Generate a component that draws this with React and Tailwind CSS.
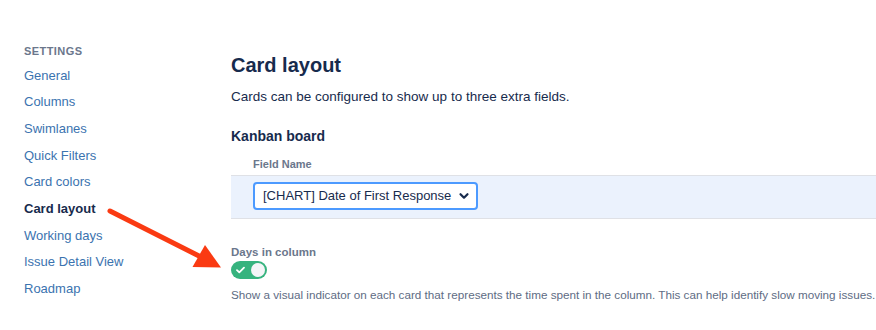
const navItems = [
  'General',
  'Columns',
  'Swimlanes',
  'Quick Filters',
  'Card colors',
  'Card layout',
  'Working days',
  'Issue Detail View',
  'Roadmap',
]

export default function App() {
  return (
    <div className="relative flex w-[876px] h-[330px] overflow-hidden bg-white font-['Liberation_Sans',Arial,sans-serif]">
      {/* Sidebar */}
      <aside className="w-[231px] shrink-0 pl-6 pt-[44px]">
        <div className="h-[14px] leading-[14px] text-[11px] font-bold tracking-[0.04em] text-[#6b778c]">
          SETTINGS
        </div>
        <nav className="mt-[4px] flex flex-col">
          {navItems.map((item) => (
            <div
              key={item}
              className={
                item === 'Card layout'
                  ? 'h-[26.7px] flex items-center text-[13px] font-bold text-[#172b4d]'
                  : 'h-[26.7px] flex items-center text-[13px] text-[#3b73af]'
              }
            >
              {item}
            </div>
          ))}
        </nav>
      </aside>

      {/* Main content */}
      <main className="flex-1 pt-[53px]">
        <h1 className="h-6 leading-6 text-[20px] font-bold text-[#172b4d]">Card layout</h1>
        <p className="mt-[10px] h-5 leading-5 text-[13.5px] text-[#172b4d]">
          Cards can be configured to show up to three extra fields.
        </p>
        <h2 className="mt-[19px] h-5 leading-5 text-[14px] font-bold text-[#172b4d]">Kanban board</h2>

        <div className="mt-[10px] pl-[22px] h-4 leading-4 text-[11px] font-bold text-[#6b778c]">Field Name</div>
        <div className="mt-[3px] border-y border-[#dfe1e6] bg-[#ebf2fd] pt-[6px] pb-[8px] pl-[22px]">
          <div className="flex h-[28px] w-[225px] items-center justify-between rounded-[4px] border-2 border-[#4c9aff] bg-white pl-[8px] pr-[6px] text-[13px] text-[#172b4d] whitespace-nowrap">
            <span>[CHART] Date of First Response</span>
            <svg width="12" height="12" viewBox="0 0 12 12" fill="none">
              <path d="M2.5 4.2 6 7.7 9.5 4.2" stroke="#172b4d" strokeWidth="2.2" strokeLinecap="round" strokeLinejoin="round" />
            </svg>
          </div>
        </div>

        <div className="mt-[25px] h-4 leading-4 text-[11.5px] font-bold text-[#6b778c]">Days in column</div>
        <div className="mt-[1px] flex h-[18px] w-[36px] items-center justify-between rounded-full bg-[#36b37e] pl-[5px] pr-[2px]">
          <svg width="9" height="8" viewBox="0 0 9 8" fill="none">
            <path d="M1 4.2 3.3 6.4 8 1.6" stroke="white" strokeWidth="1.8" strokeLinecap="round" strokeLinejoin="round" />
          </svg>
          <span className="h-[14px] w-[14px] rounded-full bg-[#f4f5f7]" />
        </div>
        <p className="mt-[8px] h-4 leading-4 text-[11.7px] text-[#5e6c84] whitespace-nowrap">
          Show a visual indicator on each card that represents the time spent in the column. This can help identify slow moving issues.
        </p>
      </main>

      {/* Annotation arrow */}
      <svg className="pointer-events-none absolute left-0 top-0" width="876" height="330" viewBox="0 0 876 330">
        <line x1="110" y1="211" x2="201" y2="257" stroke="#fa3a12" strokeWidth="5" strokeLinecap="round" />
        <polygon points="205,245 192.5,267 221,267.5" fill="#fa3a12" />
      </svg>
    </div>
  )
}
